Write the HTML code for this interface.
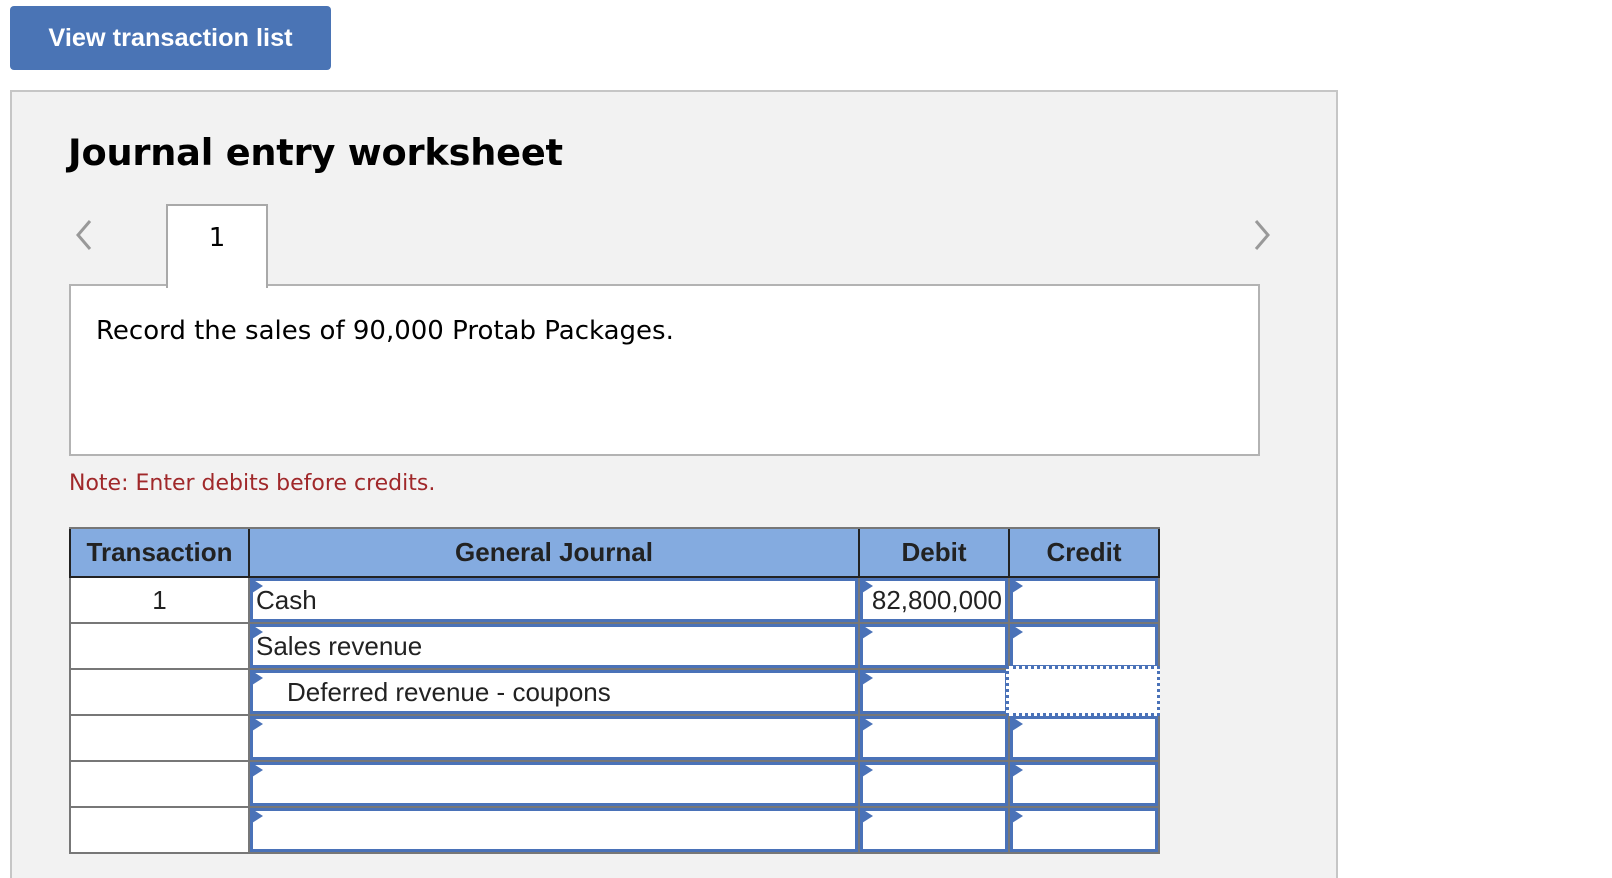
<!DOCTYPE html>
<html><head><meta charset="utf-8"><style>
*{margin:0;padding:0;box-sizing:border-box}
html,body{width:1612px;height:878px;overflow:hidden}
body{background:#fff;font-family:"Liberation Sans",sans-serif}
#w{position:relative;width:1612px;height:878px;overflow:hidden}
.a{position:absolute}
.btn{left:10px;top:6px;width:321px;height:64px;background:#4a74b5;border-radius:4px;color:#fff;font:bold 25.3px "Liberation Sans",sans-serif;line-height:64px;text-align:center}
.panel{left:10px;top:90px;width:1328px;height:800px;background:#f2f2f2;border:2px solid #c6c6c6}
.title{left:68px;top:131px;font:bold 36.7px "DejaVu Sans",sans-serif;letter-spacing:-0.2px;color:#000}
.tab{left:166px;top:204px;width:102px;height:84px;background:#fff;border:2px solid #a9a9a9;border-bottom:none;z-index:2;font:26px "DejaVu Sans",sans-serif;text-align:center;line-height:64px}
.box{left:69px;top:284px;width:1191px;height:172px;background:#fff;border:2px solid #b3b3b3}
.rec{left:96px;top:316px;font:26px "DejaVu Sans",sans-serif;color:#000}
.note{left:69px;top:471px;font:22px "DejaVu Sans",sans-serif;color:#a0282a}
.tbl{left:69px;top:527px;width:1091px;height:327px;background:#777}
.hd{top:529px;height:47px;background:#84abe0;font:bold 26px "Liberation Sans",sans-serif;color:#222;text-align:center;line-height:47px}
.tc{background:#fff;font:26px "Liberation Sans",sans-serif;color:#222;text-align:center;line-height:44px}
.in{background:#fff;border:3px solid #4a72b8;font:26px "Liberation Sans",sans-serif;color:#222;line-height:38px;padding-left:3px;white-space:nowrap}
.in::before{content:"";position:absolute;left:-1px;top:-2px;border-left:11px solid #4a72b8;border-top:7px solid transparent;border-bottom:7px solid transparent}
.dot{background:#fff;border:3px dotted #4a72b8}
</style></head><body><div id="w">
<div class="a btn">View transaction list</div>
<div class="a panel"></div>
<div class="a title">Journal entry worksheet</div>
<svg class="a" style="left:72px;top:218px" width="24" height="34"><path d="M18 3 L6 17 L18 31" fill="none" stroke="#999" stroke-width="3"/></svg>
<svg class="a" style="left:1250px;top:218px" width="24" height="34"><path d="M6 3 L18 17 L6 31" fill="none" stroke="#999" stroke-width="3"/></svg>
<div class="a tab">1</div>
<div class="a box"></div>
<div class="a rec">Record the sales of 90,000 Protab Packages.</div>
<div class="a note">Note: Enter debits before credits.</div>

<div class="a tbl"></div>
<div class="a" style="left:69px;top:529px;width:1091px;height:49px;background:#222"></div>
<div class="a hd" style="left:71px;width:177px">Transaction</div>
<div class="a hd" style="left:250px;width:608px">General Journal</div>
<div class="a hd" style="left:860px;width:148px">Debit</div>
<div class="a hd" style="left:1010px;width:148px">Credit</div>

<div class="a tc" style="left:71px;top:578px;width:177px;height:44px">1</div>
<div class="a tc" style="left:71px;top:624px;width:177px;height:44px"></div>
<div class="a tc" style="left:71px;top:670px;width:177px;height:44px"></div>
<div class="a tc" style="left:71px;top:716px;width:177px;height:44px"></div>
<div class="a tc" style="left:71px;top:762px;width:177px;height:44px"></div>
<div class="a tc" style="left:71px;top:808px;width:177px;height:44px"></div>

<div class="a in" style="left:250px;top:578px;width:608px;height:44px">Cash</div>
<div class="a in" style="left:250px;top:624px;width:608px;height:44px">Sales revenue</div>
<div class="a in" style="left:250px;top:670px;width:608px;height:44px;padding-left:34px">Deferred revenue - coupons</div>
<div class="a in" style="left:250px;top:716px;width:608px;height:44px"></div>
<div class="a in" style="left:250px;top:762px;width:608px;height:44px"></div>
<div class="a in" style="left:250px;top:808px;width:608px;height:44px"></div>

<div class="a in" style="left:860px;top:578px;width:148px;height:44px;text-align:right;padding-right:3px">82,800,000</div>
<div class="a in" style="left:860px;top:624px;width:148px;height:44px"></div>
<div class="a in" style="left:860px;top:670px;width:148px;height:44px"></div>
<div class="a in" style="left:860px;top:716px;width:148px;height:44px"></div>
<div class="a in" style="left:860px;top:762px;width:148px;height:44px"></div>
<div class="a in" style="left:860px;top:808px;width:148px;height:44px"></div>

<div class="a in" style="left:1010px;top:578px;width:148px;height:44px"></div>
<div class="a in" style="left:1010px;top:624px;width:148px;height:44px"></div>
<div class="a dot" style="left:1006px;top:666px;width:154px;height:50px"></div>
<div class="a in" style="left:1010px;top:716px;width:148px;height:44px"></div>
<div class="a in" style="left:1010px;top:762px;width:148px;height:44px"></div>
<div class="a in" style="left:1010px;top:808px;width:148px;height:44px"></div>
</div></body></html>
